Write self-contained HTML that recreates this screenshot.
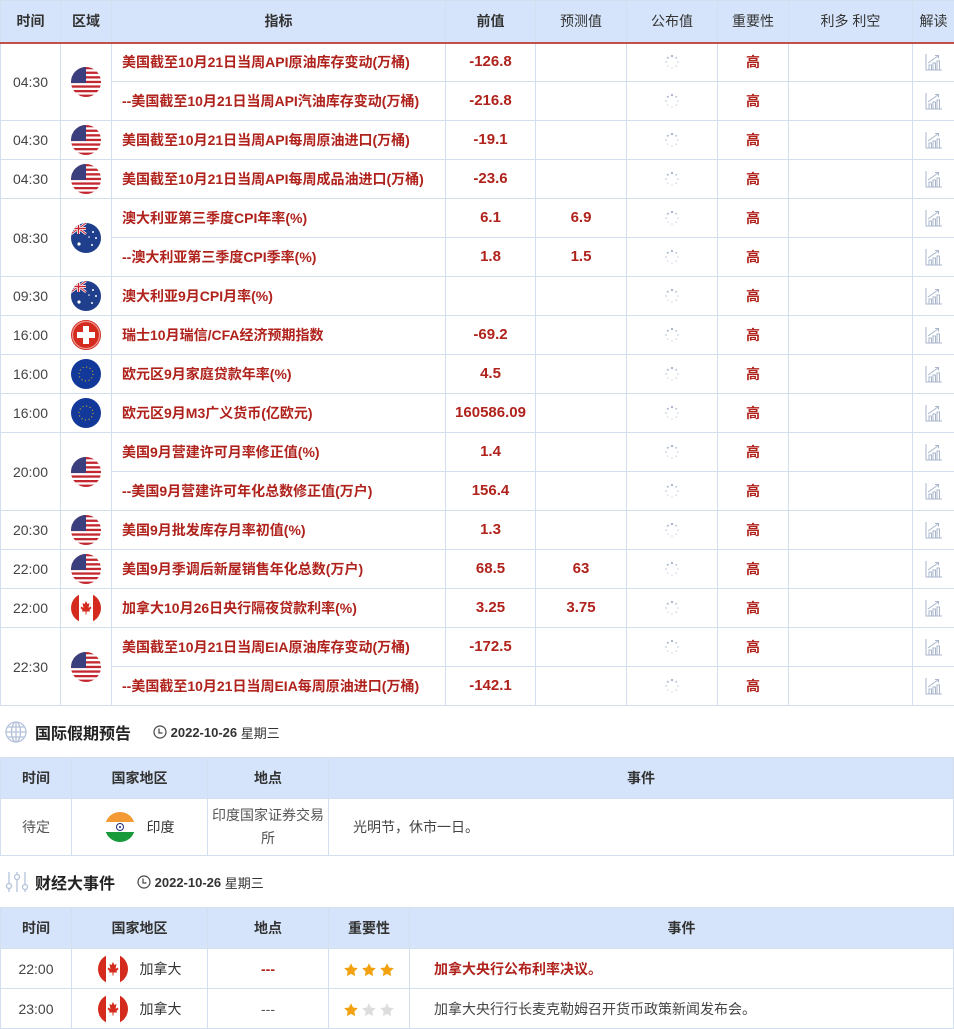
<!DOCTYPE html>
<html><head><meta charset="utf-8"><style>
*{margin:0;padding:0;box-sizing:border-box}
body{width:954px;height:1029px;background:#fff;font-family:"Liberation Sans","Noto Sans CJK SC",sans-serif;color:#333;overflow:hidden;position:relative}
table{border-collapse:collapse;table-layout:fixed;position:absolute;left:0}
td,th{border:1px solid #d3deee;text-align:center;font-size:14px;vertical-align:middle;line-height:18px}
td svg,th svg{vertical-align:middle}
th{background:#d5e4fa;font-weight:bold;color:#333;font-size:14px}
.main th{border-bottom:2px solid #c0504d;height:42px}
.main td{height:39px;padding:0}
.ind{text-align:left;padding-left:10px!important;color:#b0221c;font-weight:bold;white-space:nowrap}
.v{color:#b0221c;font-weight:bold;font-size:15px}
.t{color:#444;font-size:14px}
.hi{color:#b0221c;font-weight:bold}
.fl{width:30px;height:30px;display:inline-block;vertical-align:middle}
.ic{display:block;margin:0 auto}
.sec{position:absolute;left:0;display:flex;align-items:center;height:24px}
.sec .title{font-size:16px;font-weight:bold;color:#222;margin-left:8px}
.sec .date{font-size:13px;font-weight:bold;color:#333;margin-left:22px;display:flex;align-items:center}
.sub th{height:41px}
</style></head><body>
<svg width="0" height="0" style="position:absolute">
<defs>
<clipPath id="c"><circle cx="15" cy="15" r="15"/></clipPath>
<symbol id="us" viewBox="0 0 30 30"><g clip-path="url(#c)"><rect width="30" height="30" fill="#fff"/>
<rect y="0" width="30" height="2.3" fill="#c3272f"/><rect y="4.6" width="30" height="2.3" fill="#c3272f"/><rect y="9.2" width="30" height="2.3" fill="#c3272f"/><rect y="13.8" width="30" height="2.3" fill="#c3272f"/><rect y="18.4" width="30" height="2.3" fill="#c3272f"/><rect y="23" width="30" height="2.3" fill="#c3272f"/><rect y="27.6" width="30" height="2.4" fill="#c3272f"/>
<rect width="15" height="16" fill="#3b3f7e"/></g></symbol>
<symbol id="au" viewBox="0 0 30 30"><g clip-path="url(#c)"><rect width="30" height="30" fill="#1f3f8c"/>
<path d="M0 0L15 11M15 0L0 11" stroke="#fff" stroke-width="2.5"/><path d="M0 0L15 11M15 0L0 11" stroke="#c8202f" stroke-width="1"/><rect x="6" y="0" width="3" height="11" fill="#fff"/><rect y="4" width="15" height="3" fill="#fff"/><rect x="6.8" y="0" width="1.4" height="11" fill="#c8202f"/><rect y="4.8" width="15" height="1.4" fill="#c8202f"/>
<circle cx="8" cy="21" r="1.6" fill="#fff"/><circle cx="22" cy="9" r="1" fill="#fff"/><circle cx="25" cy="15" r="1" fill="#fff"/><circle cx="21" cy="22" r="1" fill="#fff"/><circle cx="18" cy="14" r="0.8" fill="#fff"/></g></symbol>
<symbol id="ch" viewBox="0 0 30 30"><circle cx="15" cy="15" r="15" fill="#d52b1e"/><circle cx="15" cy="15" r="13.5" fill="none" stroke="#fff" stroke-width="1.2" opacity=".5"/><rect x="12" y="6" width="6" height="18" fill="#fff"/><rect x="6" y="12" width="18" height="6" fill="#fff"/></symbol>
<symbol id="eu" viewBox="0 0 30 30"><circle cx="15" cy="15" r="15" fill="#12399a"/><circle cx="15" cy="15" r="7" fill="none" stroke="#f2c300" stroke-width="1" stroke-dasharray="1 2.66"/></symbol>
<symbol id="ca" viewBox="0 0 30 30"><g clip-path="url(#c)"><rect width="30" height="30" fill="#fff"/><rect width="8" height="30" fill="#d52b1e"/><rect x="22" width="8" height="30" fill="#d52b1e"/><path d="M15 8l1.5 3 2-1-1 5 2-1.5 1 1.5-2 2 .5 1.5h-3.5v3h-1v-3H11l.5-1.5-2-2 1-1.5 2 1.5-1-5 2 1z" fill="#d52b1e"/></g></symbol>
<symbol id="in" viewBox="0 0 30 30"><g clip-path="url(#c)"><rect width="30" height="10" fill="#f39a34"/><rect y="10" width="30" height="10" fill="#fff"/><rect y="20" width="30" height="10" fill="#199a3a"/><circle cx="15" cy="15" r="3.5" fill="none" stroke="#1d2d7e" stroke-width="1"/><circle cx="15" cy="15" r="1" fill="#1d2d7e"/></g></symbol>
<symbol id="sp" viewBox="0 0 16 16"><g fill="#9fb0c8"><circle cx="8" cy="2" r="1.1"/><circle cx="12.2" cy="3.8" r="0.9" opacity=".8"/><circle cx="14" cy="8" r="0.8" opacity=".6"/><circle cx="12.2" cy="12.2" r="0.8" opacity=".5"/><circle cx="8" cy="14" r="0.8" opacity=".45"/><circle cx="3.8" cy="12.2" r="0.8" opacity=".4"/><circle cx="2" cy="8" r="0.9" opacity=".6"/><circle cx="3.8" cy="3.8" r="1" opacity=".9"/></g></symbol>
<symbol id="ch2" viewBox="0 0 20 20"><g fill="none" stroke="#a9b6cc" stroke-width="1"><path d="M2 2v16h16"/><rect x="5" y="13" width="2.5" height="5"/><rect x="9" y="11" width="2.5" height="7"/><rect x="13" y="9" width="2.5" height="9"/><path d="M4 11l10-7"/><path d="M11 3.5h3.5v3"/></g></symbol>
<symbol id="star" viewBox="0 0 20 20"><path d="M10 1.5l2.6 5.4 5.9.8-4.3 4.1 1 5.8L10 14.8 4.8 17.6l1-5.8L1.5 7.7l5.9-.8z"/></symbol>
</defs></svg>

<table class="main" style="top:0;width:954px">
<colgroup><col style="width:60px"><col style="width:51px"><col style="width:334px"><col style="width:90px"><col style="width:91px"><col style="width:91px"><col style="width:71px"><col style="width:124px"><col style="width:42px"></colgroup>
<tr><th>时间</th><th>区域</th><th>指标</th><th>前值</th><th style="font-weight:normal">预测值</th><th style="font-weight:normal">公布值</th><th style="font-weight:normal">重要性</th><th style="font-weight:normal">利多 利空</th><th style="font-weight:normal">解读</th></tr>
<tr><td rowspan="2" class="t">04:30</td><td rowspan="2"><svg class="fl"><use href="#us"/></svg></td><td class="ind">美国截至10月21日当周API原油库存变动(万桶)</td><td class="v">-126.8</td><td></td><td><svg class="ic" width="16" height="16"><use href="#sp"/></svg></td><td class="hi">高</td><td></td><td><svg class="ic" width="20" height="20"><use href="#ch2"/></svg></td></tr>
<tr><td class="ind">--美国截至10月21日当周API汽油库存变动(万桶)</td><td class="v">-216.8</td><td></td><td><svg class="ic" width="16" height="16"><use href="#sp"/></svg></td><td class="hi">高</td><td></td><td><svg class="ic" width="20" height="20"><use href="#ch2"/></svg></td></tr>
<tr><td class="t">04:30</td><td><svg class="fl"><use href="#us"/></svg></td><td class="ind">美国截至10月21日当周API每周原油进口(万桶)</td><td class="v">-19.1</td><td></td><td><svg class="ic" width="16" height="16"><use href="#sp"/></svg></td><td class="hi">高</td><td></td><td><svg class="ic" width="20" height="20"><use href="#ch2"/></svg></td></tr>
<tr><td class="t">04:30</td><td><svg class="fl"><use href="#us"/></svg></td><td class="ind">美国截至10月21日当周API每周成品油进口(万桶)</td><td class="v">-23.6</td><td></td><td><svg class="ic" width="16" height="16"><use href="#sp"/></svg></td><td class="hi">高</td><td></td><td><svg class="ic" width="20" height="20"><use href="#ch2"/></svg></td></tr>
<tr><td rowspan="2" class="t">08:30</td><td rowspan="2"><svg class="fl"><use href="#au"/></svg></td><td class="ind">澳大利亚第三季度CPI年率(%)</td><td class="v">6.1</td><td class="v">6.9</td><td><svg class="ic" width="16" height="16"><use href="#sp"/></svg></td><td class="hi">高</td><td></td><td><svg class="ic" width="20" height="20"><use href="#ch2"/></svg></td></tr>
<tr><td class="ind">--澳大利亚第三季度CPI季率(%)</td><td class="v">1.8</td><td class="v">1.5</td><td><svg class="ic" width="16" height="16"><use href="#sp"/></svg></td><td class="hi">高</td><td></td><td><svg class="ic" width="20" height="20"><use href="#ch2"/></svg></td></tr>
<tr><td class="t">09:30</td><td><svg class="fl"><use href="#au"/></svg></td><td class="ind">澳大利亚9月CPI月率(%)</td><td class="v"></td><td></td><td><svg class="ic" width="16" height="16"><use href="#sp"/></svg></td><td class="hi">高</td><td></td><td><svg class="ic" width="20" height="20"><use href="#ch2"/></svg></td></tr>
<tr><td class="t">16:00</td><td><svg class="fl"><use href="#ch"/></svg></td><td class="ind">瑞士10月瑞信/CFA经济预期指数</td><td class="v">-69.2</td><td></td><td><svg class="ic" width="16" height="16"><use href="#sp"/></svg></td><td class="hi">高</td><td></td><td><svg class="ic" width="20" height="20"><use href="#ch2"/></svg></td></tr>
<tr><td class="t">16:00</td><td><svg class="fl"><use href="#eu"/></svg></td><td class="ind">欧元区9月家庭贷款年率(%)</td><td class="v">4.5</td><td></td><td><svg class="ic" width="16" height="16"><use href="#sp"/></svg></td><td class="hi">高</td><td></td><td><svg class="ic" width="20" height="20"><use href="#ch2"/></svg></td></tr>
<tr><td class="t">16:00</td><td><svg class="fl"><use href="#eu"/></svg></td><td class="ind">欧元区9月M3广义货币(亿欧元)</td><td class="v">160586.09</td><td></td><td><svg class="ic" width="16" height="16"><use href="#sp"/></svg></td><td class="hi">高</td><td></td><td><svg class="ic" width="20" height="20"><use href="#ch2"/></svg></td></tr>
<tr><td rowspan="2" class="t">20:00</td><td rowspan="2"><svg class="fl"><use href="#us"/></svg></td><td class="ind">美国9月营建许可月率修正值(%)</td><td class="v">1.4</td><td></td><td><svg class="ic" width="16" height="16"><use href="#sp"/></svg></td><td class="hi">高</td><td></td><td><svg class="ic" width="20" height="20"><use href="#ch2"/></svg></td></tr>
<tr><td class="ind">--美国9月营建许可年化总数修正值(万户)</td><td class="v">156.4</td><td></td><td><svg class="ic" width="16" height="16"><use href="#sp"/></svg></td><td class="hi">高</td><td></td><td><svg class="ic" width="20" height="20"><use href="#ch2"/></svg></td></tr>
<tr><td class="t">20:30</td><td><svg class="fl"><use href="#us"/></svg></td><td class="ind">美国9月批发库存月率初值(%)</td><td class="v">1.3</td><td></td><td><svg class="ic" width="16" height="16"><use href="#sp"/></svg></td><td class="hi">高</td><td></td><td><svg class="ic" width="20" height="20"><use href="#ch2"/></svg></td></tr>
<tr><td class="t">22:00</td><td><svg class="fl"><use href="#us"/></svg></td><td class="ind">美国9月季调后新屋销售年化总数(万户)</td><td class="v">68.5</td><td class="v">63</td><td><svg class="ic" width="16" height="16"><use href="#sp"/></svg></td><td class="hi">高</td><td></td><td><svg class="ic" width="20" height="20"><use href="#ch2"/></svg></td></tr>
<tr><td class="t">22:00</td><td><svg class="fl"><use href="#ca"/></svg></td><td class="ind">加拿大10月26日央行隔夜贷款利率(%)</td><td class="v">3.25</td><td class="v">3.75</td><td><svg class="ic" width="16" height="16"><use href="#sp"/></svg></td><td class="hi">高</td><td></td><td><svg class="ic" width="20" height="20"><use href="#ch2"/></svg></td></tr>
<tr><td rowspan="2" class="t">22:30</td><td rowspan="2"><svg class="fl"><use href="#us"/></svg></td><td class="ind">美国截至10月21日当周EIA原油库存变动(万桶)</td><td class="v">-172.5</td><td></td><td><svg class="ic" width="16" height="16"><use href="#sp"/></svg></td><td class="hi">高</td><td></td><td><svg class="ic" width="20" height="20"><use href="#ch2"/></svg></td></tr>
<tr><td class="ind">--美国截至10月21日当周EIA每周原油进口(万桶)</td><td class="v">-142.1</td><td></td><td><svg class="ic" width="16" height="16"><use href="#sp"/></svg></td><td class="hi">高</td><td></td><td><svg class="ic" width="20" height="20"><use href="#ch2"/></svg></td></tr>
</table>

<div class="sec" style="top:720px;left:5px">
<svg width="22" height="22" viewBox="0 0 22 22" fill="none" stroke="#b4c2da" stroke-width="1.3"><circle cx="11" cy="11" r="10"/><ellipse cx="11" cy="11" rx="4.5" ry="10"/><path d="M1 11h20M2.5 6h17M2.5 16h17M11 1v20"/></svg>
<span class="title">国际假期预告</span>
<span class="date"><svg width="14" height="14" viewBox="0 0 14 14" fill="none" stroke="#444" stroke-width="1.2"><circle cx="7" cy="7" r="6"/><path d="M6 3.5V8h3.5"/></svg>&nbsp;2022-10-26 <span style="font-weight:normal">&nbsp;星期三</span></span>
</div>

<table class="sub" style="top:757px;width:954px">
<colgroup><col style="width:71px"><col style="width:136px"><col style="width:121px"><col></colgroup>
<tr><th>时间</th><th>国家地区</th><th>地点</th><th>事件</th></tr>
<tr><td style="height:57px;color:#555">待定</td><td><svg class="fl"><use href="#in"/></svg><span style="margin-left:12px;vertical-align:middle">印度</span></td><td style="color:#555;line-height:23px;padding:0 4px">印度国家证券交易所</td><td style="text-align:left;padding-left:24px;color:#444">光明节，休市一日。</td></tr>
</table>

<div class="sec" style="top:870px;left:5px">
<svg width="24" height="22" viewBox="0 0 24 22" fill="none" stroke="#b4c2da" stroke-width="1.3"><path d="M4 1v20M12 1v20M20 1v20"/><circle cx="4" cy="15" r="2.5" fill="#fff"/><circle cx="12" cy="6" r="2.5" fill="#fff"/><circle cx="20" cy="16" r="2.5" fill="#fff"/></svg>
<span class="title" style="margin-left:6px">财经大事件</span>
<span class="date"><svg width="14" height="14" viewBox="0 0 14 14" fill="none" stroke="#444" stroke-width="1.2"><circle cx="7" cy="7" r="6"/><path d="M6 3.5V8h3.5"/></svg>&nbsp;2022-10-26 <span style="font-weight:normal">&nbsp;星期三</span></span>
</div>

<table class="sub" style="top:907px;width:954px">
<colgroup><col style="width:71px"><col style="width:136px"><col style="width:121px"><col style="width:81px"><col></colgroup>
<tr><th>时间</th><th>国家地区</th><th>地点</th><th>重要性</th><th>事件</th></tr>
<tr><td class="t" style="height:40px">22:00</td><td><svg class="fl"><use href="#ca"/></svg><span style="margin-left:12px;vertical-align:middle">加拿大</span></td><td class="hi">---</td><td><svg width="16" height="16" fill="#f3a10f"><use href="#star"/></svg><svg width="16" height="16" fill="#f3a10f" style="margin-left:2px"><use href="#star"/></svg><svg width="16" height="16" fill="#f3a10f" style="margin-left:2px"><use href="#star"/></svg></td><td class="hi" style="text-align:left;padding-left:24px">加拿大央行公布利率决议。</td></tr>
<tr><td class="t" style="height:40px">23:00</td><td><svg class="fl"><use href="#ca"/></svg><span style="margin-left:12px;vertical-align:middle">加拿大</span></td><td style="color:#555">---</td><td><svg width="16" height="16" fill="#f3a10f"><use href="#star"/></svg><svg width="16" height="16" fill="#ddd" style="margin-left:2px"><use href="#star"/></svg><svg width="16" height="16" fill="#ddd" style="margin-left:2px"><use href="#star"/></svg></td><td style="text-align:left;padding-left:24px;color:#444">加拿大央行行长麦克勒姆召开货币政策新闻发布会。</td></tr>
</table>
</body></html>
